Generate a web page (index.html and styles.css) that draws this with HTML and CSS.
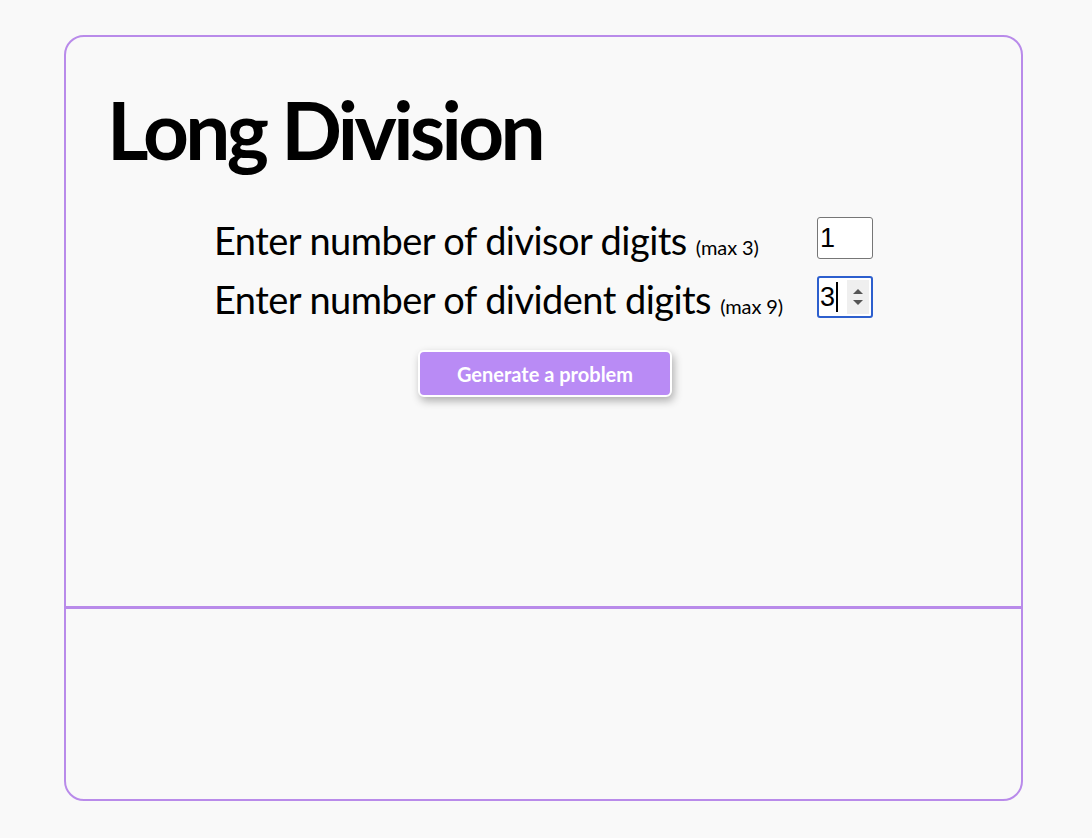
FILE: index.html
```html
<!DOCTYPE html>
<html>
<head>
<meta charset="utf-8">
<link rel="stylesheet" href="styles.css">
</head>
<body>
<main class="card">
  <section class="top">
    <h1 class="title">Long Division</h1>
    <div class="form">
      <label class="label">Enter number of divisor digits <small>(max 3)</small></label>
      <div class="field"><span class="val">1</span></div>
      <label class="label">Enter number of divident digits <small>(max 9)</small></label>
      <div class="field focused"><span class="val">3</span><span class="caret"></span>
        <span class="spin">
          <svg width="14" height="22" viewBox="0 0 14 22"><path d="M2 8 L7 3 L12 8 Z" fill="#555"/><path d="M2 14 L7 19 L12 14 Z" fill="#555"/></svg>
        </span>
      </div>
    </div>
    <div class="actions">
      <button class="btn">Generate a problem</button>
    </div>
  </section>
  <section class="bottom"></section>
</main>
</body>
</html>
```
FILE: styles.css
```css
html, body { margin: 0; padding: 0; }
body {
  background: #f9f9f9;
  font-family: "Lato", "Open Sans", sans-serif;
  color: #000;
  width: 1092px;
  height: 838px;
  overflow: hidden;
}
.card {
  margin: 35px 0 0 64px;
  width: 955px;
  height: 762px;
  border: 2px solid #b98bea;
  border-radius: 20px;
  display: flex;
  flex-direction: column;
}
.top {
  height: 569px;
  border-bottom: 3px solid #b98bea;
  padding: 0 0 0 41px;
}
.title {
  margin: 44px 0 0 0;
  font-size: 80px;
  font-weight: 700;
  letter-spacing: -3.6px;
  line-height: 96px;
}
.form {
  margin: 40px 0 0 107px;
  display: grid;
  grid-template-columns: 603px 56px;
  grid-auto-rows: 42px;
  row-gap: 17px;
  align-items: center;
}
.label {
  font-size: 38px;
  line-height: 42px;
  padding-top: 4px;
  letter-spacing: -0.55px;
  white-space: nowrap;
}
.label small {
  font-size: 20px;
  line-height: 1;
  letter-spacing: -0.1px;
}
.field {
  position: relative;
  box-sizing: border-box;
  width: 56px;
  height: 42px;
  border: 1px solid #767676;
  border-radius: 3px;
  background: #fff;
  display: flex;
  align-items: center;
  padding-left: 2px;
  font-family: "Liberation Sans", sans-serif;
  font-size: 27px;
}
.field.focused {
  border: 2px solid #2d5fce;
  padding-left: 1px;
}
.caret {
  display: inline-block;
  width: 2px;
  height: 30px;
  background: #000;
  margin-left: 1px;
}
.spin {
  position: absolute;
  right: 2px;
  top: 2px;
  bottom: 2px;
  width: 22px;
  background: #efefef;
  display: flex;
  align-items: center;
  justify-content: center;
}
.actions {
  display: flex;
  margin-top: 32px;
  padding-left: 311px;
}
.btn {
  width: 254px;
  height: 47px;
  background: #b98bf5;
  color: #fff;
  border: 2px solid #fff;
  border-radius: 6px;
  font-family: "Lato", sans-serif;
  font-size: 20px;
  font-weight: 700;
  letter-spacing: 0;
  box-shadow: 2px 4px 8px rgba(0,0,0,0.3);
}
.bottom { flex: 1; }
```
